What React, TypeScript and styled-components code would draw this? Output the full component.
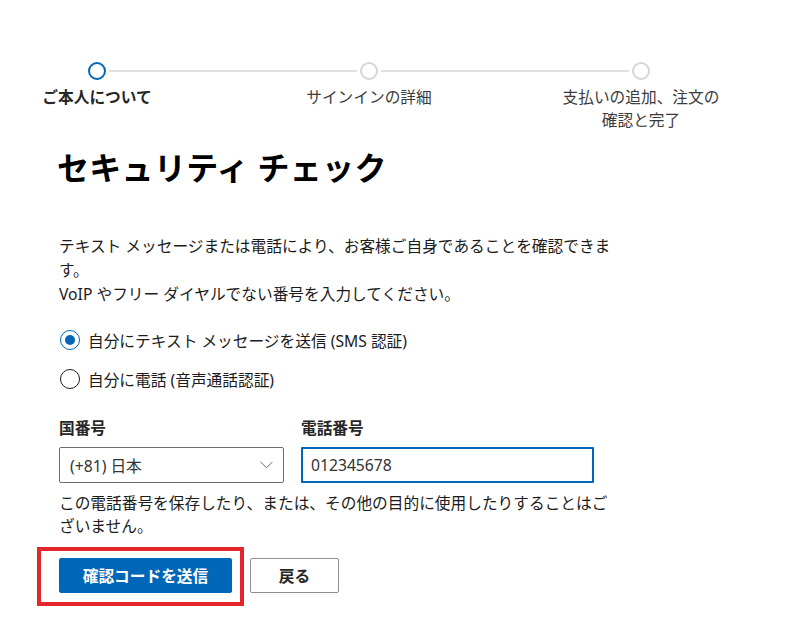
import React from "react";
import styled, { createGlobalStyle } from "styled-components";

const GlobalStyle = createGlobalStyle`
  html, body {
    margin: 0;
    padding: 0;
    background: #ffffff;
  }
  body {
    font-family: "Noto Sans", "Noto Sans CJK JP", sans-serif;
    color: #1b1b1b;
  }
`;

const BLUE = "#0067b8";

const Page = styled.div`
  width: 808px;
  min-height: 626px;
  padding-top: 62px;
  box-sizing: border-box;
`;

/* ---------- stepper ---------- */

const Stepper = styled.div`
  display: flex;
  flex-direction: column;
`;

const Track = styled.div`
  display: flex;
  align-items: center;
  margin-left: 88px;
  height: 18px;
`;

const Dot = styled.span<{ $active?: boolean }>`
  width: 18px;
  height: 18px;
  box-sizing: border-box;
  border-radius: 50%;
  border: 2px solid ${(p) => (p.$active ? BLUE : "#d6d6d6")};
  flex: none;
`;

const Connector = styled.span`
  width: 248px;
  height: 2px;
  margin: 0 3px;
  background: #e1e1e1;
  flex: none;
`;

const StepLabels = styled.div`
  display: flex;
  gap: 107px;
  margin-left: 14.5px;
  margin-top: 5.5px;
`;

const StepLabel = styled.div<{ $active?: boolean }>`
  width: 165px;
  text-align: center;
  font-size: 15.7px;
  line-height: 23px;
  font-weight: ${(p) => (p.$active ? 700 : 400)};
  color: ${(p) => (p.$active ? "#262626" : "#3b3b3b")};
`;

/* ---------- form ---------- */

const Content = styled.main`
  padding-left: 59px;
  width: 560px;
`;

const Title = styled.h1`
  margin: 16.5px 0 0 -2px;
  font-size: 32px;
  line-height: 40px;
  font-weight: 700;
  color: #000;
  letter-spacing: 0.3px;
`;

const Intro = styled.p`
  margin: 46px 0 0;
  font-size: 15.7px;
  line-height: 24px;
  color: #1b1b1b;
`;

const RadioGroup = styled.div`
  margin-top: 22px;
  display: flex;
  flex-direction: column;
  gap: 15px;
`;

const RadioRow = styled.label`
  display: flex;
  align-items: center;
  gap: 8px;
  height: 24px;
  margin-left: 1px;
  font-size: 15.7px;
  color: #1b1b1b;
  cursor: pointer;
`;

const RadioMark = styled.span<{ $checked?: boolean }>`
  width: 20px;
  height: 20px;
  box-sizing: border-box;
  border-radius: 50%;
  border: 1px solid ${(p) => (p.$checked ? BLUE : "#1b1b1b")};
  display: flex;
  align-items: center;
  justify-content: center;
  flex: none;

  &::after {
    content: "";
    width: 10px;
    height: 10px;
    border-radius: 50%;
    background: ${BLUE};
    display: ${(p) => (p.$checked ? "block" : "none")};
  }
`;

const Fields = styled.div`
  margin-top: 25px;
  display: flex;
  gap: 17px;
`;

const Field = styled.div<{ $width: number }>`
  width: ${(p) => p.$width}px;
  display: flex;
  flex-direction: column;
  gap: 7px;
`;

const FieldLabel = styled.span`
  font-size: 15.7px;
  line-height: 24px;
  font-weight: 700;
  color: #262626;
`;

const SelectBox = styled.div`
  height: 36px;
  box-sizing: border-box;
  border: 1px solid #6e6e6e;
  border-radius: 2px;
  display: flex;
  align-items: center;
  justify-content: space-between;
  padding: 0 10px 0 10px;
  font-size: 15.7px;
  color: #333;
`;

const TextInput = styled.input`
  height: 36px;
  box-sizing: border-box;
  border: 2px solid ${BLUE};
  border-radius: 1px;
  padding: 0 8px;
  font-family: inherit;
  font-size: 15.7px;
  color: #333;
  outline: none;
  width: 100%;
`;

const Note = styled.p`
  margin: 8.5px 0 0;
  font-size: 15.7px;
  line-height: 23px;
  color: #1b1b1b;
`;

const Actions = styled.div`
  margin-top: 20.5px;
  display: flex;
  gap: 18px;
`;

const Highlight = styled.div`
  position: relative;
  display: flex;

  &::before {
    content: "";
    position: absolute;
    left: -22px;
    top: -11px;
    width: 207px;
    height: 59px;
    box-sizing: border-box;
    border: 4px solid #e3262b;
    pointer-events: none;
  }
`;

const Button = styled.button<{ $primary?: boolean; $width: number }>`
  width: ${(p) => p.$width}px;
  height: 35px;
  border-radius: 2px;
  font-family: inherit;
  font-size: 15.7px;
  font-weight: 700;
  cursor: pointer;
  border: 1px solid ${(p) => (p.$primary ? BLUE : "#8f8f8f")};
  background: ${(p) => (p.$primary ? BLUE : "#ffffff")};
  color: ${(p) => (p.$primary ? "#ffffff" : "#262626")};
  padding: 0;
`;

const Chevron = () => (
  <svg width="13" height="8" viewBox="0 0 13 8" fill="none">
    <polyline points="0.5,0.8 6.5,6.8 12.5,0.8" stroke="#6b6b6b" strokeWidth="1" />
  </svg>
);

export default function App() {
  return (
    <Page>
      <GlobalStyle />
      <Stepper>
        <Track>
          <Dot $active />
          <Connector />
          <Dot />
          <Connector />
          <Dot />
        </Track>
        <StepLabels>
          <StepLabel $active>ご本人について</StepLabel>
          <StepLabel>サインインの詳細</StepLabel>
          <StepLabel>支払いの追加、注文の確認と完了</StepLabel>
        </StepLabels>
      </Stepper>

      <Content>
        <Title>セキュリティ チェック</Title>
        <Intro>
          テキスト メッセージまたは電話により、お客様ご自身であることを確認できます。
          <br />
          VoIP やフリー ダイヤルでない番号を入力してください。
        </Intro>

        <RadioGroup>
          <RadioRow>
            <RadioMark $checked />
            自分にテキスト メッセージを送信 (SMS 認証)
          </RadioRow>
          <RadioRow>
            <RadioMark />
            自分に電話 (音声通話認証)
          </RadioRow>
        </RadioGroup>

        <Fields>
          <Field $width={225}>
            <FieldLabel>国番号</FieldLabel>
            <SelectBox>
              <span>(+81) 日本</span>
              <Chevron />
            </SelectBox>
          </Field>
          <Field $width={293}>
            <FieldLabel>電話番号</FieldLabel>
            <TextInput defaultValue="012345678" />
          </Field>
        </Fields>

        <Note>
          この電話番号を保存したり、または、その他の目的に使用したりすることはございません。
        </Note>

        <Actions>
          <Highlight>
            <Button $primary $width={173}>
              確認コードを送信
            </Button>
          </Highlight>
          <Button $width={89}>戻る</Button>
        </Actions>
      </Content>
    </Page>
  );
}
